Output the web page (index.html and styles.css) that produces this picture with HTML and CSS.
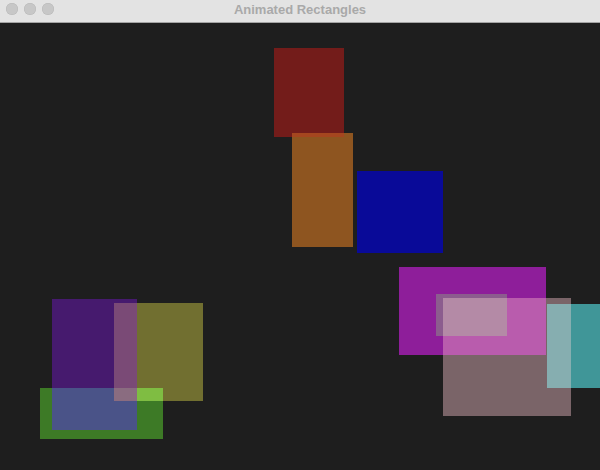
FILE: index.html
```html
<!DOCTYPE html>
<html>
<head>
<meta charset="utf-8">
<title>Animated Rectangles</title>
<link rel="stylesheet" href="styles.css">
</head>
<body>
<div class="window">
  <div class="titlebar">
    <div class="lights">
      <span class="light"></span>
      <span class="light"></span>
      <span class="light"></span>
    </div>
    <div class="title">Animated Rectangles</div>
  </div>
  <div class="canvas">
    <div class="r red"></div>
    <div class="r orange"></div>
    <div class="r red-orange"></div>
    <div class="r blue"></div>

    <div class="r purple"></div>
    <div class="r olive"></div>
    <div class="r green"></div>
    <div class="r purple-olive"></div>
    <div class="r purple-green"></div>
    <div class="r olive-green"></div>
    <div class="r triple"></div>

    <div class="r magenta"></div>
    <div class="r rosy"></div>
    <div class="r magenta-rosy"></div>
    <div class="r pink"></div>
    <div class="r pink-rosy"></div>
    <div class="r cyan"></div>
    <div class="r cyan-rosy"></div>
  </div>
</div>
</body>
</html>
```
FILE: styles.css
```css
html, body {
  margin: 0;
  padding: 0;
  width: 600px;
  height: 470px;
  overflow: hidden;
  background: #1e1e1e;
}
.window {
  display: flex;
  flex-direction: column;
  width: 600px;
  height: 470px;
}
.titlebar {
  position: relative;
  height: 22px;
  flex: 0 0 22px;
  background: #e3e3e3;
  border-bottom: 1px solid #a4a4a4;
  display: flex;
  align-items: center;
  justify-content: center;
}
.lights {
  position: absolute;
  left: 6px;
  top: 3px;
  display: flex;
  gap: 6px;
}
.light {
  width: 12px;
  height: 12px;
  border-radius: 50%;
  background: #c7c7c7;
  box-shadow: inset 0 0 0 0.5px #b8b8b8;
}
.title {
  font-family: "Liberation Sans", Arial, sans-serif;
  font-weight: bold;
  font-size: 13px;
  color: #a9a9a9;
  margin-top: -3px;
}
.canvas {
  position: relative;
  flex: 1;
  background: #1e1e1e;
  overflow: hidden;
}
.r { position: absolute; }

.red { left: 274px; top: 25px; width: 70px; height: 89px; background: #731c1a; }
.orange { left: 292px; top: 110px; width: 61px; height: 114px; background: #8e5520; }
.red-orange { left: 292px; top: 110px; width: 52px; height: 4px; background: #a5461f; }
.blue { left: 357px; top: 148px; width: 86px; height: 82px; background: #090a98; }

.purple { left: 52px; top: 276px; width: 85px; height: 131px; background: #461a6e; }
.olive { left: 114px; top: 280px; width: 89px; height: 98px; background: #716f30; }
.green { left: 40px; top: 365px; width: 123px; height: 51px; background: #3d7a26; }
.purple-olive { left: 114px; top: 280px; width: 23px; height: 85px; background: #7a4a76; }
.purple-green { left: 52px; top: 365px; width: 85px; height: 42px; background: #4a5388; }
.olive-green { left: 114px; top: 365px; width: 49px; height: 13px; background: #7fbd42; }
.triple { left: 114px; top: 365px; width: 23px; height: 13px; background: #8a6c80; }

.magenta { left: 399px; top: 244px; width: 147px; height: 88px; background: #8e1e9a; }
.rosy { left: 443px; top: 275px; width: 128px; height: 118px; background: #7a6468; }
.magenta-rosy { left: 443px; top: 275px; width: 103px; height: 57px; background: #b95cad; }
.pink { left: 436px; top: 271px; width: 71px; height: 42px; background: #8c5c8e; }
.pink-rosy { left: 443px; top: 275px; width: 64px; height: 38px; background: #b48aa6; }
.cyan { left: 547px; top: 281px; width: 53px; height: 84px; background: #409698; }
.cyan-rosy { left: 547px; top: 281px; width: 24px; height: 84px; background: #86aeb0; }
```
